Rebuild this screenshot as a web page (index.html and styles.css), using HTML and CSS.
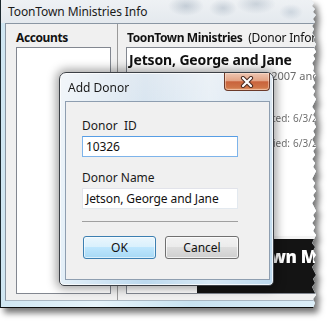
FILE: index.html
```html
<!DOCTYPE html>
<html>
<head>
<meta charset="utf-8">
<link rel="stylesheet" href="styles.css">
</head>
<body>
<div class="shot">
  <div class="win">
    <div class="titlebar"><span class="title">ToonTown Ministries Info</span></div>
    <div class="frame">
      <div class="client">
        <div class="left-pane">
          <div class="pane-label">Accounts</div>
          <div class="listbox"></div>
        </div>
        <div class="splitter"></div>
        <div class="right-pane">
          <div class="pane-label nowrap">ToonTown Ministries <span class="normal">(Donor Information)</span></div>
          <div class="detail-box">
            <div class="donor-name">Jetson, George and Jane</div>
            <div class="donor-sub">(10326) Active donor since 2007 and</div>
            <div class="meta">
              <span class="meta-label">Date Created:</span><span class="meta-val">6/3/2009</span>
              <span class="meta-label">Date Modified:</span><span class="meta-val">6/3/2009</span>
            </div>
            <div class="spacer"></div>
            <div class="banner-wrap">
              <div class="banner"><span class="banner-text">ToonTown Ministries</span></div>
            </div>
          </div>
        </div>
      </div>
    </div>
  </div>
</div>

<div class="dlg">
  <div class="dlg-title">
    <span class="dlg-caption">Add Donor</span>
    <div class="close-btn">
      <svg width="16" height="12" viewBox="0 0 16 12">
        <path d="M4 2 L12 10 M12 2 L4 10" stroke="#4a2a20" stroke-width="4.2" stroke-linecap="round"/>
        <path d="M4 2 L12 10 M12 2 L4 10" stroke="#ffffff" stroke-width="2.2" stroke-linecap="round"/>
      </svg>
    </div>
  </div>
  <div class="dlg-body">
    <div class="field-label">Donor&nbsp; ID</div>
    <div class="textbox focused">10326</div>
    <div class="field-label second">Donor Name</div>
    <div class="textbox">Jetson, George and Jane</div>
    <div class="sep"></div>
    <div class="buttons">
      <div class="btn default">OK</div>
      <div class="btn">Cancel</div>
    </div>
  </div>
</div>
</body>
</html>
```
FILE: styles.css
```css
html, body {
  margin: 0;
  padding: 0;
  background: #ffffff;
  width: 331px;
  height: 325px;
  overflow: hidden;
  font-family: "Noto Sans", "Open Sans", sans-serif;
  font-size: 12px;
  color: #1e1e1e;
}

.shot {
  width: 318px;
  height: 308px;
  filter: drop-shadow(4px 5px 3px rgba(0, 0, 0, 0.55));
}

.win {
  width: 318px;
  height: 308px;
  box-sizing: border-box;
  border-left: 1px solid #1d2a30;
  border-bottom: 1px solid #0c0c0c;
  display: flex;
  flex-direction: column;
  background:
    radial-gradient(ellipse 6px 10px at 3px 104px, rgba(40, 90, 90, 0.7), transparent),
    radial-gradient(ellipse 6px 12px at 3px 170px, rgba(40, 90, 90, 0.6), transparent),
    radial-gradient(ellipse 6px 14px at 3px 248px, rgba(40, 90, 90, 0.6), transparent),
    linear-gradient(#e3e9ee, #dce5ec);
  clip-path: polygon(0 0, 311px 0, 314px 3px, 312px 6px, 315px 9px, 313px 12px, 316px 15px, 313px 19px, 315px 22px, 312px 26px, 314px 29px, 312px 33px, 315px 37px, 313px 40px, 316px 44px, 314px 48px, 316px 52px, 313px 55px, 315px 59px, 312px 63px, 314px 67px, 313px 71px, 316px 75px, 313px 79px, 315px 83px, 312px 87px, 315px 91px, 313px 95px, 316px 99px, 314px 103px, 312px 107px, 315px 111px, 313px 115px, 316px 119px, 314px 123px, 316px 127px, 313px 131px, 315px 135px, 312px 139px, 314px 143px, 316px 147px, 313px 151px, 315px 155px, 312px 159px, 315px 163px, 313px 167px, 316px 171px, 314px 175px, 312px 179px, 315px 183px, 313px 187px, 316px 191px, 313px 195px, 315px 199px, 312px 203px, 314px 207px, 316px 211px, 313px 215px, 315px 219px, 312px 223px, 315px 227px, 313px 231px, 316px 235px, 314px 239px, 312px 243px, 315px 247px, 313px 251px, 316px 255px, 313px 259px, 315px 263px, 312px 267px, 314px 271px, 316px 275px, 313px 279px, 315px 283px, 312px 287px, 314px 291px, 316px 295px, 313px 299px, 315px 303px, 313px 308px, 0 308px);
}

.titlebar {
  height: 23px;
  flex: none;
  padding-left: 7px;
  display: flex;
  align-items: center;
  background:
    radial-gradient(ellipse 18px 10px at 185px 6px, rgba(120, 140, 160, 0.35), transparent),
    radial-gradient(ellipse 14px 9px at 222px 8px, rgba(120, 140, 160, 0.3), transparent),
    radial-gradient(ellipse 20px 10px at 255px 4px, rgba(120, 140, 160, 0.3), transparent),
    radial-gradient(ellipse 12px 8px at 290px 12px, rgba(140, 160, 180, 0.3), transparent),
    linear-gradient(#eef1f4, #e4e9ee);
}

.title {
  font-size: 12px;
  color: #1a1a1a;
  letter-spacing: -0.1px;
}

.frame {
  flex: 1;
  display: flex;
  padding: 0 0 6px 4px;
  background: linear-gradient(90deg, #cfe6f2, #e6f3fa 30%, #c8e2f0 60%, #dceef8);
}

.client {
  flex: 1;
  display: flex;
  background: #f0f0f0;
  border-top: 1px solid #8a96a3;
  border-left: 1px solid #8a96a3;
  border-bottom: 1px solid #a9b6c2;
  min-width: 0;
}

.left-pane {
  width: 111px;
  flex: none;
  box-sizing: border-box;
  padding: 6px 6px 6px 10px;
  display: flex;
  flex-direction: column;
}

.pane-label {
  font-weight: bold;
  font-size: 12px;
  line-height: 16px;
  height: 16px;
  margin-bottom: 1px;
  color: #111;
  letter-spacing: -0.4px;
}

.nowrap {
  white-space: nowrap;
  overflow: hidden;
  padding-left: 1px;
}

.normal {
  font-weight: normal;
  margin-left: 3px;
  letter-spacing: -0.2px;
}

.listbox {
  flex: 1;
  background: #ffffff;
  border: 1px solid #828790;
}

.splitter {
  width: 1px;
  flex: none;
  background: #9a9a9a;
}

.right-pane {
  flex: 1;
  min-width: 0;
  padding: 6px 0 6px 8px;
  display: flex;
  flex-direction: column;
}

.detail-box {
  flex: 1;
  background: #ffffff;
  border: 1px solid #828790;
  border-right: none;
  display: flex;
  flex-direction: column;
  overflow: hidden;
}

.donor-name {
  font-weight: bold;
  font-size: 14px;
  line-height: 18px;
  padding: 3px 0 0 2px;
  white-space: nowrap;
  color: #111;
  letter-spacing: -0.15px;
}

.donor-sub {
  font-size: 11px;
  color: #6a6a6a;
  white-space: nowrap;
  padding-left: 6px;
  line-height: 13px;
}

.meta {
  display: grid;
  grid-template-columns: 163px auto;
  column-gap: 3px;
  row-gap: 11px;
  margin-top: 29px;
  font-size: 10px;
  line-height: 14px;
  color: #6f6f6f;
  white-space: nowrap;
}

.meta-label {
  text-align: right;
}

.spacer {
  flex: 1;
}

.banner-wrap {
  height: 60px;
  flex: none;
  margin-left: 70px;
  display: flex;
  flex-direction: column;
  background: linear-gradient(#ffffff, #e4e4e4);
}

.banner {
  margin-top: auto;
  height: 54px;
  background: #141414;
  border-top: 3px solid #f4f4f4;
  overflow: hidden;
  white-space: nowrap;
}

.banner-text {
  display: block;
  color: #ffffff;
  font-weight: 900;
  font-size: 17px;
  letter-spacing: -0.3px;
  padding: 6px 0 0 14px;
}

/* Dialog */
.dlg {
  position: absolute;
  left: 59px;
  top: 72px;
  width: 215px;
  height: 214px;
  box-sizing: border-box;
  border: 1px solid #3c4046;
  border-radius: 7px 7px 5px 5px;
  padding: 0 3px 5px 5px;
  display: flex;
  flex-direction: column;
  background:
    linear-gradient(90deg, rgba(255,255,255,0.6), rgba(255,255,255,0) 40%, rgba(255,255,255,0.4) 70%, rgba(255,255,255,0)),
    linear-gradient(#dfe8f1, #cfe2f0 40%, #bcd9ee);
  box-shadow: 0 0 10px 3px rgba(0, 0, 0, 0.35), inset 0 0 0 1px rgba(255, 255, 255, 0.75);
}

.dlg-title {
  height: 28px;
  flex: none;
  position: relative;
  display: flex;
  align-items: center;
  padding-left: 3px;
}

.dlg-caption {
  font-size: 12px;
  color: #1a1a1a;
}

.close-btn {
  position: absolute;
  left: 159px;
  top: 0;
  width: 46px;
  height: 18px;
  box-sizing: border-box;
  border: 1px solid #6b3a2a;
  border-top: none;
  border-radius: 0 0 4px 4px;
  background: linear-gradient(#eec6b2 0%, #e3a486 45%, #c9633c 52%, #cf7548 85%, #e39e74 100%);
  box-shadow: inset 0 0 0 1px rgba(255, 235, 220, 0.45);
  display: flex;
  align-items: center;
  justify-content: center;
}

.dlg-body {
  flex: 1;
  background: #f0f0f0;
  border: 1px solid #8e9eb0;
  padding: 16px 16px 0 16px;
  display: flex;
  flex-direction: column;
}

.field-label {
  font-size: 12px;
  line-height: 16px;
  color: #1a1a1a;
  margin-bottom: 2px;
}

.field-label.second {
  margin-top: 13px;
  margin-bottom: 2px;
}

.textbox {
  height: 21px;
  width: 156px;
  box-sizing: border-box;
  background: #ffffff;
  border: 1px solid #abadb3;
  border-top-color: #e2e3ea;
  border-left-color: #e2e3ea;
  border-right-color: #e3e9ef;
  border-bottom-color: #e3e9ef;
  font-size: 12px;
  line-height: 19px;
  padding-left: 3px;
  color: #111;
  white-space: nowrap;
  letter-spacing: -0.1px;
}

.textbox.focused {
  border-color: #7eb4ea;
  border-top-color: #569de5;
}

.sep {
  width: 156px;
  height: 1px;
  background: #a0a0a0;
  margin-top: 12px;
}

.buttons {
  display: flex;
  gap: 9px;
  margin-top: 14px;
  padding-left: 1px;
}

.btn {
  width: 74px;
  height: 23px;
  box-sizing: border-box;
  border: 1px solid #707070;
  border-radius: 3px;
  background: linear-gradient(#f2f2f2 0%, #ebebeb 49%, #dddddd 50%, #cfcfcf 100%);
  box-shadow: inset 0 0 0 1px rgba(255, 255, 255, 0.7);
  display: flex;
  align-items: center;
  justify-content: center;
  font-size: 12px;
  color: #111;
}

.btn.default {
  width: 73px;
  border-color: #3c7fb1;
  background: linear-gradient(#eaf6fd 0%, #d9f0fc 49%, #bee6fd 50%, #a7d9f5 100%);
  box-shadow: inset 0 0 0 1px rgba(255, 255, 255, 0.6);
}
```
